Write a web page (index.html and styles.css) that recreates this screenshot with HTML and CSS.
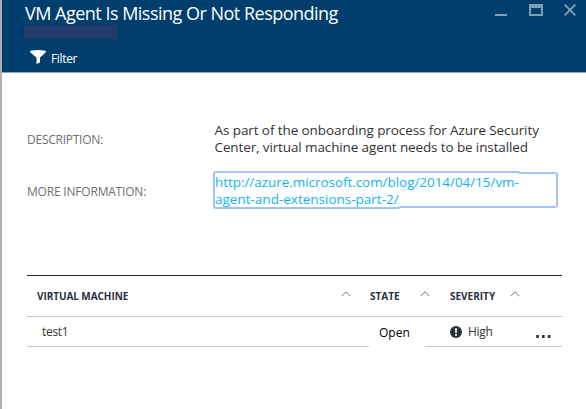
FILE: index.html
```
<!DOCTYPE html>
<html lang="en">
<head>
<meta charset="utf-8">
<title>VM Agent Is Missing Or Not Responding</title>
<link rel="stylesheet" href="styles.css">
</head>
<body>
<main class="blade">
  <header class="header">
    <div class="titles">
      <h1><span class="t-title">VM Agent Is Missing Or Not Responding</span></h1>
      <div class="subtitle"></div>
      <div class="filter">
        <svg width="16" height="14" viewBox="0 0 16 14"><path d="M0 1.5Q0 0 8 0T16 1.5Q16 2.5 10 7.5V12.5L6.5 14V7.5Q0 2.5 0 1.5Z" fill="#fff"/></svg>
        <span class="t-filter">Filter</span>
      </div>
    </div>
    <svg class="controls" width="82" height="13" viewBox="0 0 82 13">
      <path d="M0 10H12V12H0Z" fill="#809eb5"/>
      <path d="M34 0H48V12H34ZM36 4V10H46V4Z" fill="#809eb5" fill-rule="evenodd"/>
      <path d="M69.7 .7L80.3 11.3M80.3 .7L69.7 11.3" stroke="#809eb5" stroke-width="1.9"/>
    </svg>
  </header>
  <section class="details">
    <div class="label"><span class="t-desc">DESCRIPTION:</span></div>
    <div class="text"><span class="t-l1">As part of the onboarding process for Azure Security</span><br><span class="t-l2">Center, virtual machine agent needs to be installed</span></div>
    <div class="label more-info"><span class="t-more">MORE INFORMATION:</span></div>
    <a class="text link"><span class="t-l3">http://azure.microsoft.com/blog/2014/04/15/vm-</span><br><span class="t-l4">agent-and-extensions-part-2/</span>
      <svg class="ring" width="345" height="38" viewBox="0 0 345 38"><path d="M3 1H304Q306 1 307 2H342Q344 2 344 4V34Q344 36 342 36H187Q186 37 184 37H3Q1 37 1 35V3Q1 1 3 1Z" fill="none" stroke="#a3c3fb" stroke-width="2"/></svg>
    </a>
  </section>
  <section class="table">
    <div class="row head">
      <div class="vm"><span class="t-vm">VIRTUAL MACHINE</span></div>
      <svg class="sort" width="10" height="6" viewBox="0 0 10 6"><path d="M.5 5.3L5 .8L9.5 5.3" fill="none" stroke="#777" /></svg>
      <div class="state"><span class="t-state">STATE</span></div>
      <svg class="sort" width="10" height="6" viewBox="0 0 10 6"><path d="M.5 5.3L5 .8L9.5 5.3" fill="none" stroke="#777" /></svg>
      <div class="severity"><span class="t-sev">SEVERITY</span></div>
      <svg class="sort" width="10" height="6" viewBox="0 0 10 6"><path d="M.5 5.3L5 .8L9.5 5.3" fill="none" stroke="#777" /></svg>
    </div>
    <div class="row item">
      <div class="c-name"><span class="t-test">test1</span></div>
      <div class="c-state"><span class="t-open">Open</span></div>
      <div class="c-sev">
        <svg width="12" height="12" viewBox="0 0 12 12"><circle cx="6" cy="6" r="6" fill="#2b2f38"/><path d="M5 2.2H7L6.7 7H5.3ZM5 8H7V9.8H5Z" fill="#fff"/></svg>
        <span class="t-high">High</span>
        <svg class="more" width="15" height="3" viewBox="0 0 15 3"><path d="M.2 0H2.8V3H.2ZM6 0H8.6V3H6ZM11.8 0H14.4V3H11.8Z" fill="#2b3038"/></svg>
      </div>
    </div>
  </section>
</main>
</body>
</html>
```
FILE: styles.css
```
* { box-sizing: border-box; }
body { margin: 0; background: #fff; font-family: "Open Sans", "Noto Sans", sans-serif; color: #333; }
svg { display: block; flex: none; }
span { white-space: nowrap; }
.blade { width: 586px; height: 409px; overflow: hidden; border-left: 2px solid #b0b0b0; }
.header { display: flex; justify-content: space-between; height: 73px; margin-left: -2px; padding: 4px 9px 0 22px; background: #003e6e; border-left: 2px solid #1b5179; border-bottom: 1px solid #9ca3a8; color: #fff; }
h1 { margin: 0 0 0 1px; font-size: 18px; font-weight: 400; line-height: 18px; height: 21px; letter-spacing: -0.51px; }
.subtitle { width: 93px; height: 14px; background: #233a68; }
.filter { display: flex; gap: 5px; margin: 11px 0 0 6px; height: 16px; font-size: 12px; line-height: 16px; letter-spacing: -0.35px; }
.t-filter { padding-top: 1px; }
.controls { width: 82px; margin-top: 0; }
.details { display: grid; grid-template-columns: 187px 346px; grid-template-rows: 36px 38px; row-gap: 13px; margin: 49px 0 0 25px; }
.label { font-size: 12px; line-height: 36px; color: #707070; letter-spacing: -0.25px; }
.more-info { padding-top: 3px; letter-spacing: -0.2px; }
.text { font-size: 13.5px; line-height: 17px; padding-left: 0.5px; }
.t-l1 { letter-spacing: -0.09px; }
.t-l2 { letter-spacing: -0.12px; }
.t-l3 { letter-spacing: -0.05px; }
.link { position: relative; color: #12b5ee; padding-top: 3px; margin-left: -1px; padding-left: 2px; }
.t-l4 { letter-spacing: 0; }
.ring { position: absolute; left: 0; top: 0; }
.table { width: 535px; margin: 66px 0 0 25px; border-top: 1px solid #222730; }
.row { display: flex; align-items: center; }
.head { height: 41px; border-bottom: 1px solid #c8c8c8; font-size: 10px; font-weight: 700; color: #2a3040; padding-left: 10px; }
.t-vm { letter-spacing: -0.07px; }
.vm { width: 304px; }
.state { width: 50px; margin-left: 19px; }
.severity { width: 61px; margin-left: 20px; margin-right: -1px; }
.sort { margin-bottom: 5px; }
.item { height: 30px; font-size: 12px; }
.item > div { height: 30px; line-height: 29px; border-bottom: 1px solid #c8c8c8; }
.c-name { width: 342px; padding-left: 15px; }
.t-test, .t-high { letter-spacing: -0.3px; }
.item > .c-state { width: 56px; padding-left: 10px; color: #000; border-color: #fff; line-height: 31px; }
.c-sev { width: 137px; padding-left: 25px; display: flex; align-items: center; gap: 6px; }
.more { margin: 9px 11px 0 auto; }
```
